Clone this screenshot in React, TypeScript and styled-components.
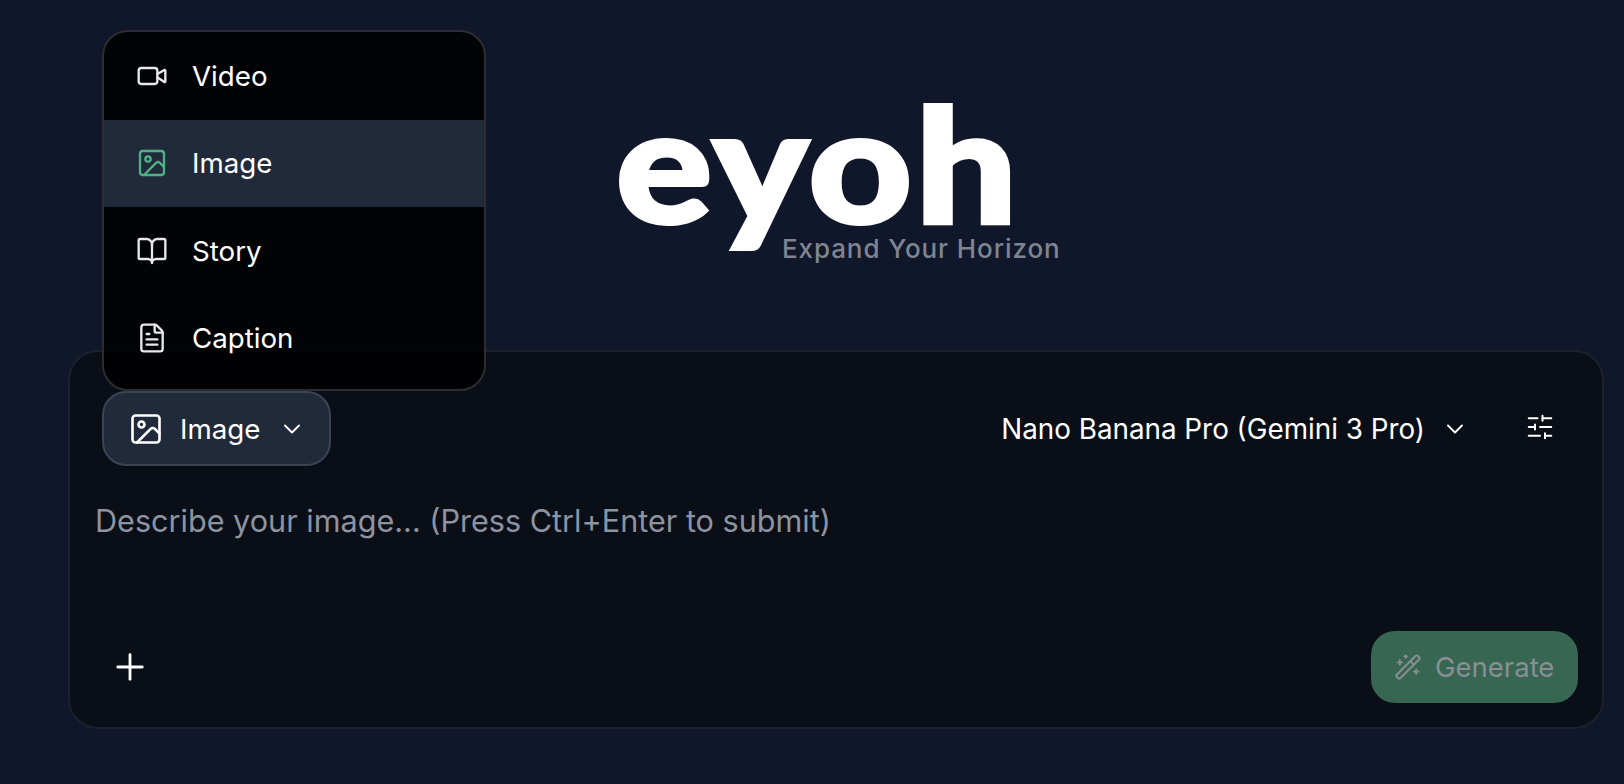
import { useState } from "react";
import styled, { createGlobalStyle } from "styled-components";
import {
  BookOpen,
  ChevronDown,
  FileText,
  Image,
  Plus,
  SlidersHorizontal,
  Video,
  WandSparkles,
} from "lucide-react";

const GlobalStyle = createGlobalStyle`
  html, body {
    margin: 0;
    height: 100%;
    background: #10172a;
  }
  body {
    font-family: Inter, "Liberation Sans", sans-serif;
    color: #fff;
  }
`;

const Page = styled.main`
  box-sizing: border-box;
  height: 784px;
  overflow: hidden;
  padding: 68px 20px 0 68px;
  display: flex;
  flex-direction: column;
  align-items: center;
`;

const Brand = styled.header`
  display: flex;
  flex-direction: column;
  width: 442px;
  height: 282px;
`;

const Wordmark = styled.div`
  margin-left: 1px;
  font-family: Lato, Inter, sans-serif;
  font-size: 158px;
  font-weight: 900;
  line-height: 188px;
  letter-spacing: 3px;
  color: #fff;
  -webkit-text-stroke: 4px #fff;
  transform: scaleX(1.135);
  transform-origin: left center;
`;

const Tagline = styled.div`
  margin: -22px 0 0 167px;
  font-size: 26px;
  font-weight: 500;
  line-height: 30px;
  letter-spacing: 0.9px;
  white-space: nowrap;
  color: #7f8490;
`;

const Card = styled.section`
  box-sizing: border-box;
  width: 100%;
  height: 379px;
  padding: 39px 24px 24px 25px;
  display: flex;
  flex-direction: column;
  background: #0a0e17;
  border: 2px solid #1c212c;
  border-radius: 30px;
`;

const Toolbar = styled.div`
  display: flex;
  align-items: center;
  justify-content: space-between;
  padding: 0 23px 0 7px;
`;

const TypePicker = styled.div`
  position: relative;
`;

const Menu = styled.ul`
  position: absolute;
  left: 0;
  bottom: 100%;
  box-sizing: border-box;
  width: 384px;
  height: 361px;
  margin: 0;
  padding: 0 0 7px;
  list-style: none;
  overflow: hidden;
  background: rgba(0, 0, 0, 0.87);
  border: 2px solid #2c2d31;
  border-radius: 26px;
`;

const MenuItem = styled.li<{ $active?: boolean }>`
  height: 87.5px;
  padding: 0 0 0 32px;
  display: flex;
  align-items: center;
  gap: 24px;
  font-size: 27.7px;
  background: ${({ $active }) => ($active ? "#202a3a" : "transparent")};
  color: #fff;

  svg {
    flex: none;
    color: ${({ $active }) => ($active ? "#4fb286" : "#e8e8ea")};
  }
`;

const TypeButton = styled.button`
  box-sizing: border-box;
  width: 229px;
  height: 75px;
  padding: 0 0 0 24px;
  display: flex;
  align-items: center;
  gap: 16px;
  font: inherit;
  font-size: 27.7px;
  color: #fff;
  background: #202a3a;
  border: 2px solid #3b4454;
  border-radius: 24px;
`;

const ButtonChevron = styled(ChevronDown)`
  margin-left: 2px;
`;

const ModelTools = styled.div`
  display: flex;
  align-items: center;
  gap: 56px;
`;

const ModelButton = styled.button`
  display: flex;
  align-items: center;
  gap: 16px;
  padding: 0;
  font: inherit;
  font-size: 27.8px;
  color: #fff;
  background: none;
  border: 0;
`;

const IconButton = styled.button<{ $lift?: number }>`
  display: flex;
  padding: 0 0 ${({ $lift }) => $lift ?? 0}px;
  color: #fff;
  background: none;
  border: 0;
`;

const Prompt = styled.textarea`
  flex: 1;
  margin-top: 33px;
  padding: 0;
  font: inherit;
  font-size: 30.6px;
  line-height: 44px;
  color: #fff;
  resize: none;
  outline: none;
  background: none;
  border: 0;

  &::placeholder {
    color: #8e93a0;
    opacity: 1;
  }
`;

const Footer = styled.div`
  display: flex;
  align-items: center;
  justify-content: space-between;
  padding-left: 14px;
`;

const GenerateButton = styled.button`
  box-sizing: border-box;
  width: 207px;
  height: 72px;
  padding: 0 0 0 23px;
  display: flex;
  align-items: center;
  gap: 13px;
  font: inherit;
  font-size: 27.5px;
  color: #8b8f94;
  background: #376652;
  border: 0;
  border-radius: 24px;
`;

const items = [
  { label: "Video", icon: Video },
  { label: "Image", icon: Image, active: true },
  { label: "Story", icon: BookOpen },
  { label: "Caption", icon: FileText },
];

export default function App() {
  const [prompt, setPrompt] = useState("");

  return (
    <>
      <GlobalStyle />
      <Page>
        <Brand>
          <Wordmark>eyoh</Wordmark>
          <Tagline>Expand Your Horizon</Tagline>
        </Brand>
        <Card>
          <Toolbar>
            <TypePicker>
              <Menu>
                {items.map(({ label, icon: Icon, active }) => (
                  <MenuItem key={label} $active={active}>
                    <Icon size={32} strokeWidth={1.75} />
                    {label}
                  </MenuItem>
                ))}
              </Menu>
              <TypeButton>
                <Image size={36} strokeWidth={1.75} />
                Image
                <ButtonChevron size={28} strokeWidth={1.6} />
              </TypeButton>
            </TypePicker>
            <ModelTools>
              <ModelButton>
                Nano Banana Pro (Gemini 3 Pro)
                <ChevronDown size={28} strokeWidth={1.6} />
              </ModelButton>
              <IconButton $lift={3}>
                <SlidersHorizontal size={30} strokeWidth={1.6} />
              </IconButton>
            </ModelTools>
          </Toolbar>
          <Prompt
            value={prompt}
            onChange={(e) => setPrompt(e.target.value)}
            placeholder="Describe your image... (Press Ctrl+Enter to submit)"
          />
          <Footer>
            <IconButton>
              <Plus size={42} strokeWidth={1.6} />
            </IconButton>
            <GenerateButton disabled>
              <WandSparkles size={28} strokeWidth={1.6} />
              Generate
            </GenerateButton>
          </Footer>
        </Card>
      </Page>
    </>
  );
}
